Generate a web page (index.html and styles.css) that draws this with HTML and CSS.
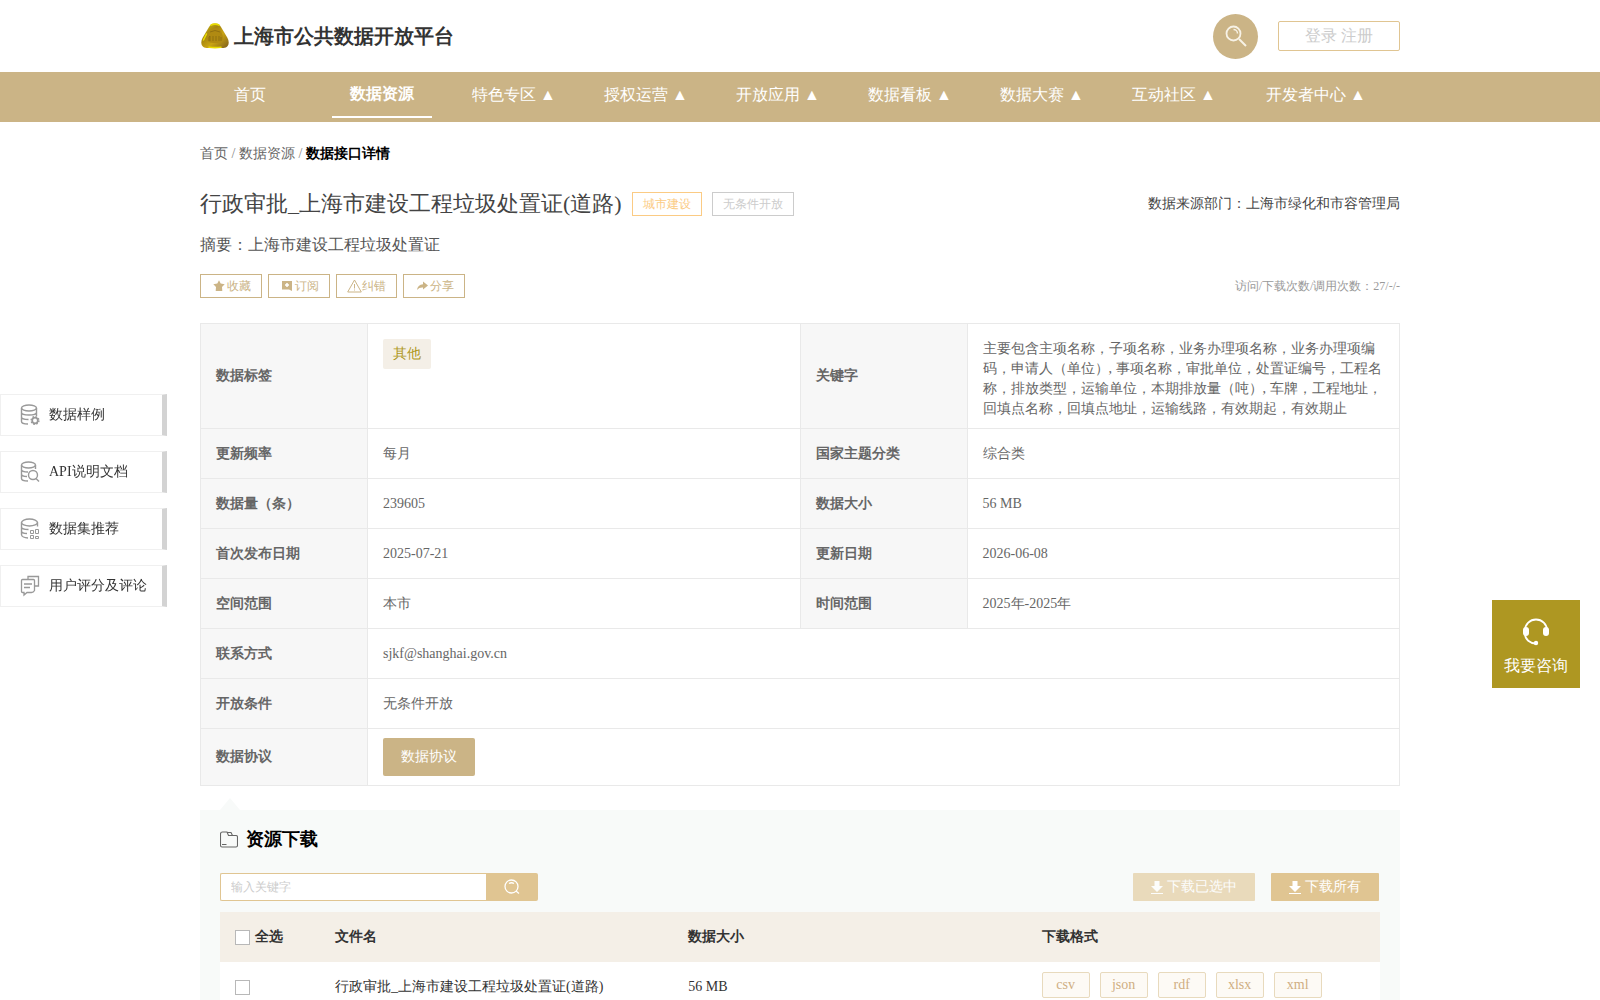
FILE: index.html
```html
<!DOCTYPE html>
<html>
<head>
<meta charset="utf-8">
<title>上海市公共数据开放平台</title>
<link rel="stylesheet" href="styles.css">
</head>
<body>
<header class="topbar container">
  <a class="brand" href="#">
    <svg class="brand-logo" viewBox="0 0 28 26" width="28" height="26" aria-hidden="true">
      <defs>
        <linearGradient id="gold" x1="0" y1="0" x2="1" y2="1">
          <stop offset="0" stop-color="#d8c810"/><stop offset=".35" stop-color="#a5850f"/>
          <stop offset=".6" stop-color="#c9a414"/><stop offset="1" stop-color="#7d5d1c"/>
        </linearGradient>
      </defs>
      <path d="M14 .5c3 0 4.500 1 6 3.500l6.500 11c2.500 5 1 10-4 10h-17c-5 0-6.500-5-4-10L8 4C9.500 1.500 11 .5 14 .5z" fill="url(#gold)"/>
      <path d="M10 2.200c2-1.400 6-1.400 8 0M5.500 11L2.500 17M8 24.200q6 .8 12 0" fill="none" stroke="#e8dc00" stroke-width="1.600" stroke-linecap="round"/>
      <path d="M14 5c5 0 8 6 8 10 0 4-3 5-8 5s-8-1-8-5C6 11 9 5 14 5z" fill="#b08a12"/>
      <path d="M8 18v-4l1-1v5m3 0v-5m3 5v-5m3 5v-5m2 5v-4M9 9q5-3 10 0" fill="none" stroke="#8d6d10" stroke-width=".9"/>
    </svg>
    <span>上海市公共数据开放平台</span>
  </a>
  <div class="top-actions">
    <button class="round-search" type="button" aria-label="搜索">
      <svg width="22" height="22" viewBox="0 0 22 22" fill="none" stroke="#f7f2e6" aria-hidden="true"><circle cx="8.500" cy="8.500" r="7" stroke-width="1.800"/><path d="M14 14l7 7" stroke-width="2"/><path d="M8.500 4.500a4 4 0 0 1 4 4" stroke-width="1.500"/></svg>
    </button>
    <a class="login" href="#">登录 注册</a>
  </div>
</header>
<nav class="mainnav">
  <div class="container nav-list">
    <a href="#">首页</a>
    <a class="active" href="#">数据资源</a>
    <a href="#">特色专区 ▲</a>
    <a href="#">授权运营 ▲</a>
    <a href="#">开放应用 ▲</a>
    <a href="#">数据看板 ▲</a>
    <a href="#">数据大赛 ▲</a>
    <a href="#">互动社区 ▲</a>
    <a class="wide" href="#">开发者中心 ▲</a>
  </div>
</nav>

<aside class="side-menu">
  <a href="#">
    <svg width="20" height="22" viewBox="0 0 20 22" fill="none" stroke="#999" stroke-width="1.400" aria-hidden="true"><ellipse cx="9" cy="4" rx="7.500" ry="3"/><path d="M1.500 4v13.500c0 1.500 2.500 2.500 6.500 2.500M16.500 4v8M1.500 8.500c0 1.500 3 2.500 7.500 2.500s7.500-1 7.500-2.500M1.500 13c0 1.500 3 2.500 7 2.500"/><circle cx="15" cy="16.500" r="2.800" stroke-width="1.700"/><circle cx="15" cy="16.500" r="3.900" stroke-dasharray="1.560 1.500"/></svg>
    <span>数据样例</span>
  </a>
  <a href="#">
    <svg width="20" height="22" viewBox="0 0 20 22" fill="none" stroke="#999" stroke-width="1.400" aria-hidden="true"><ellipse cx="8.500" cy="4" rx="7" ry="3"/><path d="M1.500 4v13.500c0 1.500 2.500 2.500 6.500 2.500M15.500 4v4M1.500 8.500c0 1.500 3 2.500 6.500 2.500M1.500 13c0 1.500 2 2.500 5.500 2.500"/><circle cx="13" cy="14" r="4.500"/><path d="M16 17.500l3 3"/></svg>
    <span>API说明文档</span>
  </a>
  <a href="#">
    <svg width="20" height="22" viewBox="0 0 20 22" fill="none" stroke="#999" stroke-width="1.400" aria-hidden="true"><ellipse cx="9.500" cy="4.500" rx="8" ry="3.500"/><path d="M1.500 4.500v12c0 2 3 3.500 6.500 3.500M17.500 4.500v4M1.500 9c0 1.500 3 2.500 7 2.500M1.500 13c0 1.500 2.500 2.500 5.500 2.500"/><path d="M10.500 12.500h3v3h-3zM15.500 11.500h3v4h-3zM10.500 17.500h3v3h-3zM15.500 18.500h3v2h-3z" stroke-width="1"/></svg>
    <span>数据集推荐</span>
  </a>
  <a href="#">
    <svg width="20" height="22" viewBox="0 0 20 22" fill="none" stroke="#999" stroke-width="1.300" aria-hidden="true"><path d="M8 5V1.500h10.500v9.500H15"/><path d="M2.500 4.500h11q1 0 1 1v10q-1 2-3 2H7l-3 2.500v-2.500H2.500q-1 0-1-1v-11q0-1 1-1zM4 9h8M4 12.500h6"/></svg>
    <span>用户评分及评论</span>
  </a>
</aside>

<a class="consult" href="#">
  <svg width="28" height="28" viewBox="0 0 28 28" aria-hidden="true"><path d="M3 14V12.500a11 11 0 0 1 22 0V14M3 16a11 9.500 0 0 0 11 9.500" fill="none" stroke="#fff" stroke-width="1.800"/><rect x="1" y="9" width="6" height="9" rx="3" fill="#fff"/><rect x="21" y="9" width="6" height="9" rx="3" fill="#fff"/><circle cx="14" cy="25" r="2.200" fill="#fff"/></svg>
  <span>我要咨询</span>
</a>

<main class="container">
  <div class="crumbs"><a href="#">首页</a> / <a href="#">数据资源</a> / <b>数据接口详情</b></div>
  <div class="title-row">
    <h1>行政审批_上海市建设工程垃圾处置证(道路)</h1>
    <span class="badge badge-topic">城市建设</span>
    <span class="badge">无条件开放</span>
    <span class="source">数据来源部门：上海市绿化和市容管理局</span>
  </div>
  <p class="summary">摘要：上海市建设工程垃圾处置证</p>
  <div class="action-row">
    <button type="button"><svg width="14" height="12" viewBox="0 0 14 12" aria-hidden="true"><path d="M7 .3l1.700 3.300 4 .6-2.700 2.900.3 3.900H3.700L4 7.100 1.300 4.200l4-.6z" fill="#cbb486"/></svg>收藏</button>
    <button type="button"><svg width="14" height="12" viewBox="0 0 14 12" aria-hidden="true"><path d="M2 1h10v10L9 9.500H2z" fill="#cbb486"/><path d="M7 3v4M5 5h4" stroke="#fff" stroke-width="1.500"/></svg>订阅</button>
    <button type="button"><svg width="13" height="12" viewBox="0 0 13 12" overflow="visible" aria-hidden="true"><path d="M6.500 0L13.300 12H-.3zM6.500 4v4.500M6.500 9.500v1" fill="none" stroke="#cbb486"/></svg>纠错</button>
    <button type="button"><svg width="14" height="12" viewBox="0 0 14 12" aria-hidden="true"><path d="M8 1.500l5 4-5 4V7.500C5.500 7.300 3.500 8 2 10c.3-3.500 2.500-5.500 6-5.800z" fill="#cbb486"/></svg>分享</button>
    <span class="visits">访问/下载次数/调用次数：27/-/-</span>
  </div>

  <table class="info">
    <colgroup><col class="col-label"><col><col class="col-label"><col></colgroup>
    <tbody>
    <tr><th>数据标签</th><td class="top-cell"><span class="tag">其他</span></td><th>关键字</th><td class="top-cell">主要包含主项名称，子项名称，业务办理项名称，业务办理项编码，申请人（单位）, 事项名称，审批单位，处置证编号，工程名称，排放类型，运输单位，本期排放量（吨）, 车牌，工程地址，回填点名称，回填点地址，运输线路，有效期起，有效期止</td></tr>
    <tr><th>更新频率</th><td>每月</td><th>国家主题分类</th><td>综合类</td></tr>
    <tr><th>数据量（条）</th><td>239605</td><th>数据大小</th><td>56 MB</td></tr>
    <tr><th>首次发布日期</th><td>2025-07-21</td><th>更新日期</th><td>2026-06-08</td></tr>
    <tr><th>空间范围</th><td>本市</td><th>时间范围</th><td>2025年-2025年</td></tr>
    <tr><th>联系方式</th><td colspan="3">sjkf@shanghai.gov.cn</td></tr>
    <tr><th>开放条件</th><td colspan="3">无条件开放</td></tr>
    <tr><th>数据协议</th><td class="agreement-cell" colspan="3"><button class="agreement" type="button">数据协议</button></td></tr>
    </tbody>
  </table>

  <section class="downloads">
    <h2><svg width="18" height="17" viewBox="0 0 18 17" fill="none" stroke="#666" stroke-width="1.100" aria-hidden="true"><path d="M2.500 1H7l1.500 3.500H16q1.500 0 1.500 1.500v8.500q0 1.500-1.500 1.500H2q-1.500 0-1.500-1.500V3q0-2 2-2zM7 1.500h4l1.500 3M2 13.500h4.500"/></svg>资源下载</h2>
    <div class="tools">
      <form class="search">
        <input type="text" placeholder="输入关键字" aria-label="输入关键字">
        <button type="button" aria-label="搜索"><svg width="16" height="16" viewBox="0 0 16 16" fill="none" stroke="#fff" stroke-width="1.300" aria-hidden="true"><circle cx="7.500" cy="7.500" r="6.500"/><path d="M12 12l3 2.500M5 4.500q2.500-1.500 5 0"/></svg></button>
      </form>
      <button class="dl" type="button" disabled><svg width="12" height="13" viewBox="0 0 12 13" fill="#fff" aria-hidden="true"><path d="M3.500 0h5v5H12l-6 6-6-6h3.500zM0 12h12v1H0z"/></svg>下载已选中</button>
      <button class="dl" type="button"><svg width="12" height="13" viewBox="0 0 12 13" fill="#fff" aria-hidden="true"><path d="M3.500 0h5v5H12l-6 6-6-6h3.500zM0 12h12v1H0z"/></svg>下载所有</button>
    </div>
    <table class="files">
      <colgroup><col class="col-check"><col><col><col></colgroup>
      <thead><tr><th><label><input type="checkbox">全选</label></th><th>文件名</th><th>数据大小</th><th>下载格式</th></tr></thead>
      <tbody><tr><td><label><input type="checkbox" aria-label="选择文件"></label></td><td>行政审批_上海市建设工程垃圾处置证(道路)</td><td>56 MB</td>
      <td class="format-cell"><div class="formats"><button type="button">csv</button><button type="button">json</button><button type="button">rdf</button><button type="button">xlsx</button><button type="button">xml</button></div></td></tr></tbody>
    </table>
  </section>
</main>
</body>
</html>
```
FILE: styles.css
```css
* { box-sizing: border-box; }
body {
  margin: 0;
  background: #fff;
  color: #333;
  font: 14px/20px "Liberation Serif", serif;
}
a { color: inherit; text-decoration: none; }
button, input { font: inherit; }
button { cursor: pointer; }
svg { flex: none; }
.container { max-width: 1200px; margin: 0 auto; }

.topbar { display: flex; justify-content: space-between; align-items: center; height: 72px; }
.brand { display: flex; align-items: center; gap: 5px; padding-left: 1px; font-size: 20px; line-height: 28px; font-weight: bold; }
.top-actions { display: flex; align-items: center; gap: 20px; }
.round-search { display: flex; align-items: center; justify-content: center; width: 45px; height: 45px; padding: 0; border: 0; border-radius: 50%; background: #cbb486; }
.login { width: 122px; border: 1px solid #e0c592; border-radius: 2px; color: #ccc; font-size: 16px; line-height: 28px; text-align: center; }

.mainnav { background: #cbb486; color: #fff; }
.nav-list { display: flex; gap: 32px; height: 50px; font-size: 16px; line-height: 46px; }
.nav-list a { min-width: 100px; height: 46px; padding: 0 8px; text-align: center; white-space: nowrap; }
.nav-list .wide { min-width: 120px; }
.nav-list .active { border-bottom: 2px solid #fff; font-weight: bold; line-height: 44px; }

.side-menu { position: fixed; left: 0; top: 394px; display: grid; gap: 15px; }
.side-menu a { display: flex; align-items: center; gap: 9px; height: 42px; padding: 0 15px 0 19px; border: 1px solid #f0f0f0; border-right: 5px solid #d3d3d3; background: #fff; }
.consult { position: fixed; right: 20px; top: 600px; display: flex; flex-direction: column; align-items: center; gap: 8px; width: 88px; height: 88px; padding-top: 18px; background: #ae9722; color: #fff; font-size: 16px; line-height: 24px; }

.crumbs { padding-top: 22px; color: #888; }
.crumbs a { color: #666; }
.crumbs b { color: #000; }
.title-row { display: flex; align-items: center; gap: 10px; margin-top: 24px; }
h1 { margin: 0; font-size: 22px; line-height: 32px; font-weight: normal; color: #444; }
.badge { padding: 0 10px; border: 1px solid #ccc; color: #ccc; font-size: 12px; line-height: 22px; }
.badge-topic { border-color: #fbcb84; color: #fbcb84; }
.source { margin-left: auto; color: #444; }
.summary { margin: 13px 0 17px; font-size: 16px; line-height: 24px; color: #555; }
.action-row { display: flex; align-items: center; gap: 6px; }
.action-row button { display: flex; align-items: center; gap: 1px; height: 24px; padding: 0 10px 0 11px; border: 1px solid #cbb486; background: #fff; color: #cbb486; font-size: 12px; }
.visits { margin-left: auto; color: #999; font-size: 12px; }

.info { width: 100%; margin-top: 25px; border-collapse: collapse; table-layout: fixed; color: #666; }
.info th, .info td { height: 50px; padding: 12px 15px; border: 1px solid #e9e9e9; text-align: left; }
.info th { background: #f7f7f7; }
.col-label { width: 167px; }
.info .top-cell { padding-top: 15px; padding-bottom: 9px; vertical-align: top; }
.tag { display: inline-block; padding: 0 10px; border-radius: 2px; background: #f4efe7; color: #ae9722; line-height: 30px; }
.info .agreement-cell { padding-top: 9px; padding-bottom: 9px; }
.agreement { display: block; height: 38px; padding: 0 18px; border: 0; border-radius: 2px; background: #cbb486; color: #fff; }

.downloads { position: relative; margin-top: 24px; padding: 16px 20px 20px; background: #f8faf9; }
.downloads::before { content: ""; position: absolute; left: 20px; top: -12px; border: solid transparent; border-width: 0 10px 12px; border-bottom-color: #f8faf9; }
h2 { display: flex; align-items: center; gap: 8px; margin: 0 0 21px; font-size: 18px; line-height: 26px; color: #000; }
.tools { display: flex; gap: 16px; margin-bottom: 11px; padding-right: 1px; }
.search { display: flex; width: 318px; height: 28px; margin-right: auto; }
.search input { flex: 1; min-width: 0; padding: 0 10px; border: 1px solid #e0c592; border-right: 0; border-radius: 2px 0 0 2px; background: #fff; font-size: 12px; }
.search input::placeholder { color: #ccc; }
.search button { display: flex; align-items: center; justify-content: center; width: 52px; border: 0; border-radius: 0 2px 2px 0; background: #e0c592; }
.dl { display: flex; align-items: center; gap: 4px; height: 28px; padding: 0 18px; border: 0; border-radius: 1px; background: #e0c592; color: #fff; }
.dl:disabled { opacity: .6; }
.files { width: 100%; border-collapse: collapse; table-layout: fixed; background: #fff; }
.files th, .files td { height: 50px; padding: 0 15px; text-align: left; }
.files th { background: #f4efe7; }
.col-check { width: 100px; }
.files label { display: flex; align-items: center; gap: 5px; }
.files input { appearance: none; width: 15px; height: 15px; margin: 0; border: 1px solid #b8b8b8; background: #fff; }
.files .format-cell { padding-bottom: 4px; }
.formats { display: flex; gap: 10px; }
.formats button { width: 48px; height: 26px; padding: 0; border: 1px solid #e8dabd; border-radius: 2px; background: #fdfaf5; color: #cfae82; }
```
